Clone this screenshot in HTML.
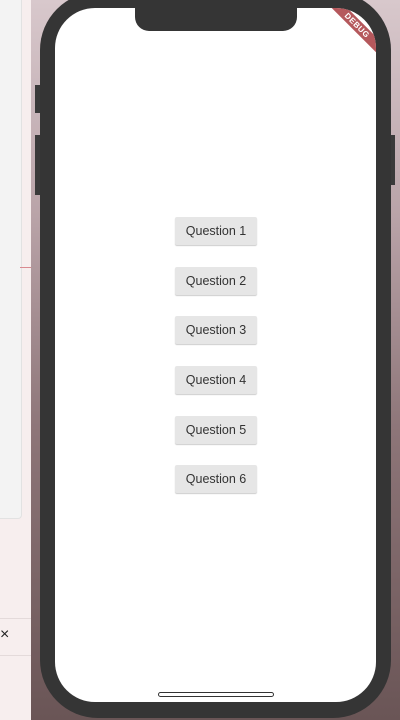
<!DOCTYPE html>
<html><head><style>
html,body{margin:0;padding:0;width:400px;height:720px;overflow:hidden;font-family:"Liberation Sans",sans-serif}
.bg{position:absolute;left:31px;top:0;width:369px;height:720px;background:linear-gradient(180deg,#d8c8cc 0%,#b9a3a8 30%,#8d7578 60%,#6a5556 100%)}
.left{position:absolute;left:0;top:0;width:31px;height:720px;background:#f7eeee}
.lp{position:absolute;left:0;top:0;width:21px;height:518px;background:#f3f3f3;border-radius:0 0 4px 0;border-right:1px solid #e2e2e2;border-bottom:1px solid #e2e2e2}
.ln{position:absolute;left:0;width:31px;height:1px;background:#e4dada}
.phone{position:absolute;left:40px;top:-8px;width:351px;height:726px;background:#353535;border-radius:58px}
.screen{position:absolute;left:55px;top:8px;width:321px;height:694px;background:#fff;border-radius:40px;overflow:hidden}
.notch{position:absolute;top:0;width:162px;height:23px;background:#353535;border-radius:0 0 14px 14px}
.btn{position:absolute;left:175px;width:82px;height:28px;background:#e6e6e6;color:#333;font-size:12.5px;line-height:28px;text-align:center;box-shadow:0 1px 1px rgba(0,0,0,.2);border-radius:2px}
.home{position:absolute;left:158px;top:692px;width:114px;height:3px;border:1px solid #333;border-radius:3px;background:#fff}
.debug{position:absolute;width:80px;height:11px;background:#b5585c;color:#fff;font-size:8px;font-weight:bold;line-height:11px;text-align:center;transform:rotate(45deg);letter-spacing:.5px}
.side{position:absolute;background:#3a3a3a}
</style></head><body>
<div class="left"><div class="lp"></div><div class="ln" style="top:618px"></div><div class="ln" style="top:655px"></div>
<div style="position:absolute;left:0;top:626px;font-size:16px;color:#222">×</div></div>
<div style="position:absolute;left:20px;top:267px;width:11px;height:1px;background:#d98a90"></div>
<div class="bg"></div>
<div class="side" style="left:35px;top:85px;width:6px;height:28px"></div>
<div class="side" style="left:35px;top:135px;width:6px;height:60px"></div>
<div class="side" style="left:389px;top:135px;width:6px;height:50px"></div>
<div class="phone"></div>
<div class="screen">
<div class="notch" style="left:80px"></div>
<div class="debug" style="left:262px;top:12px">DEBUG</div>
</div>
<div class="btn" style="top:217px">Question 1</div>
<div class="btn" style="top:267px">Question 2</div>
<div class="btn" style="top:316px">Question 3</div>
<div class="btn" style="top:366px">Question 4</div>
<div class="btn" style="top:416px">Question 5</div>
<div class="btn" style="top:465px">Question 6</div>
<div class="home"></div>
</body></html>
